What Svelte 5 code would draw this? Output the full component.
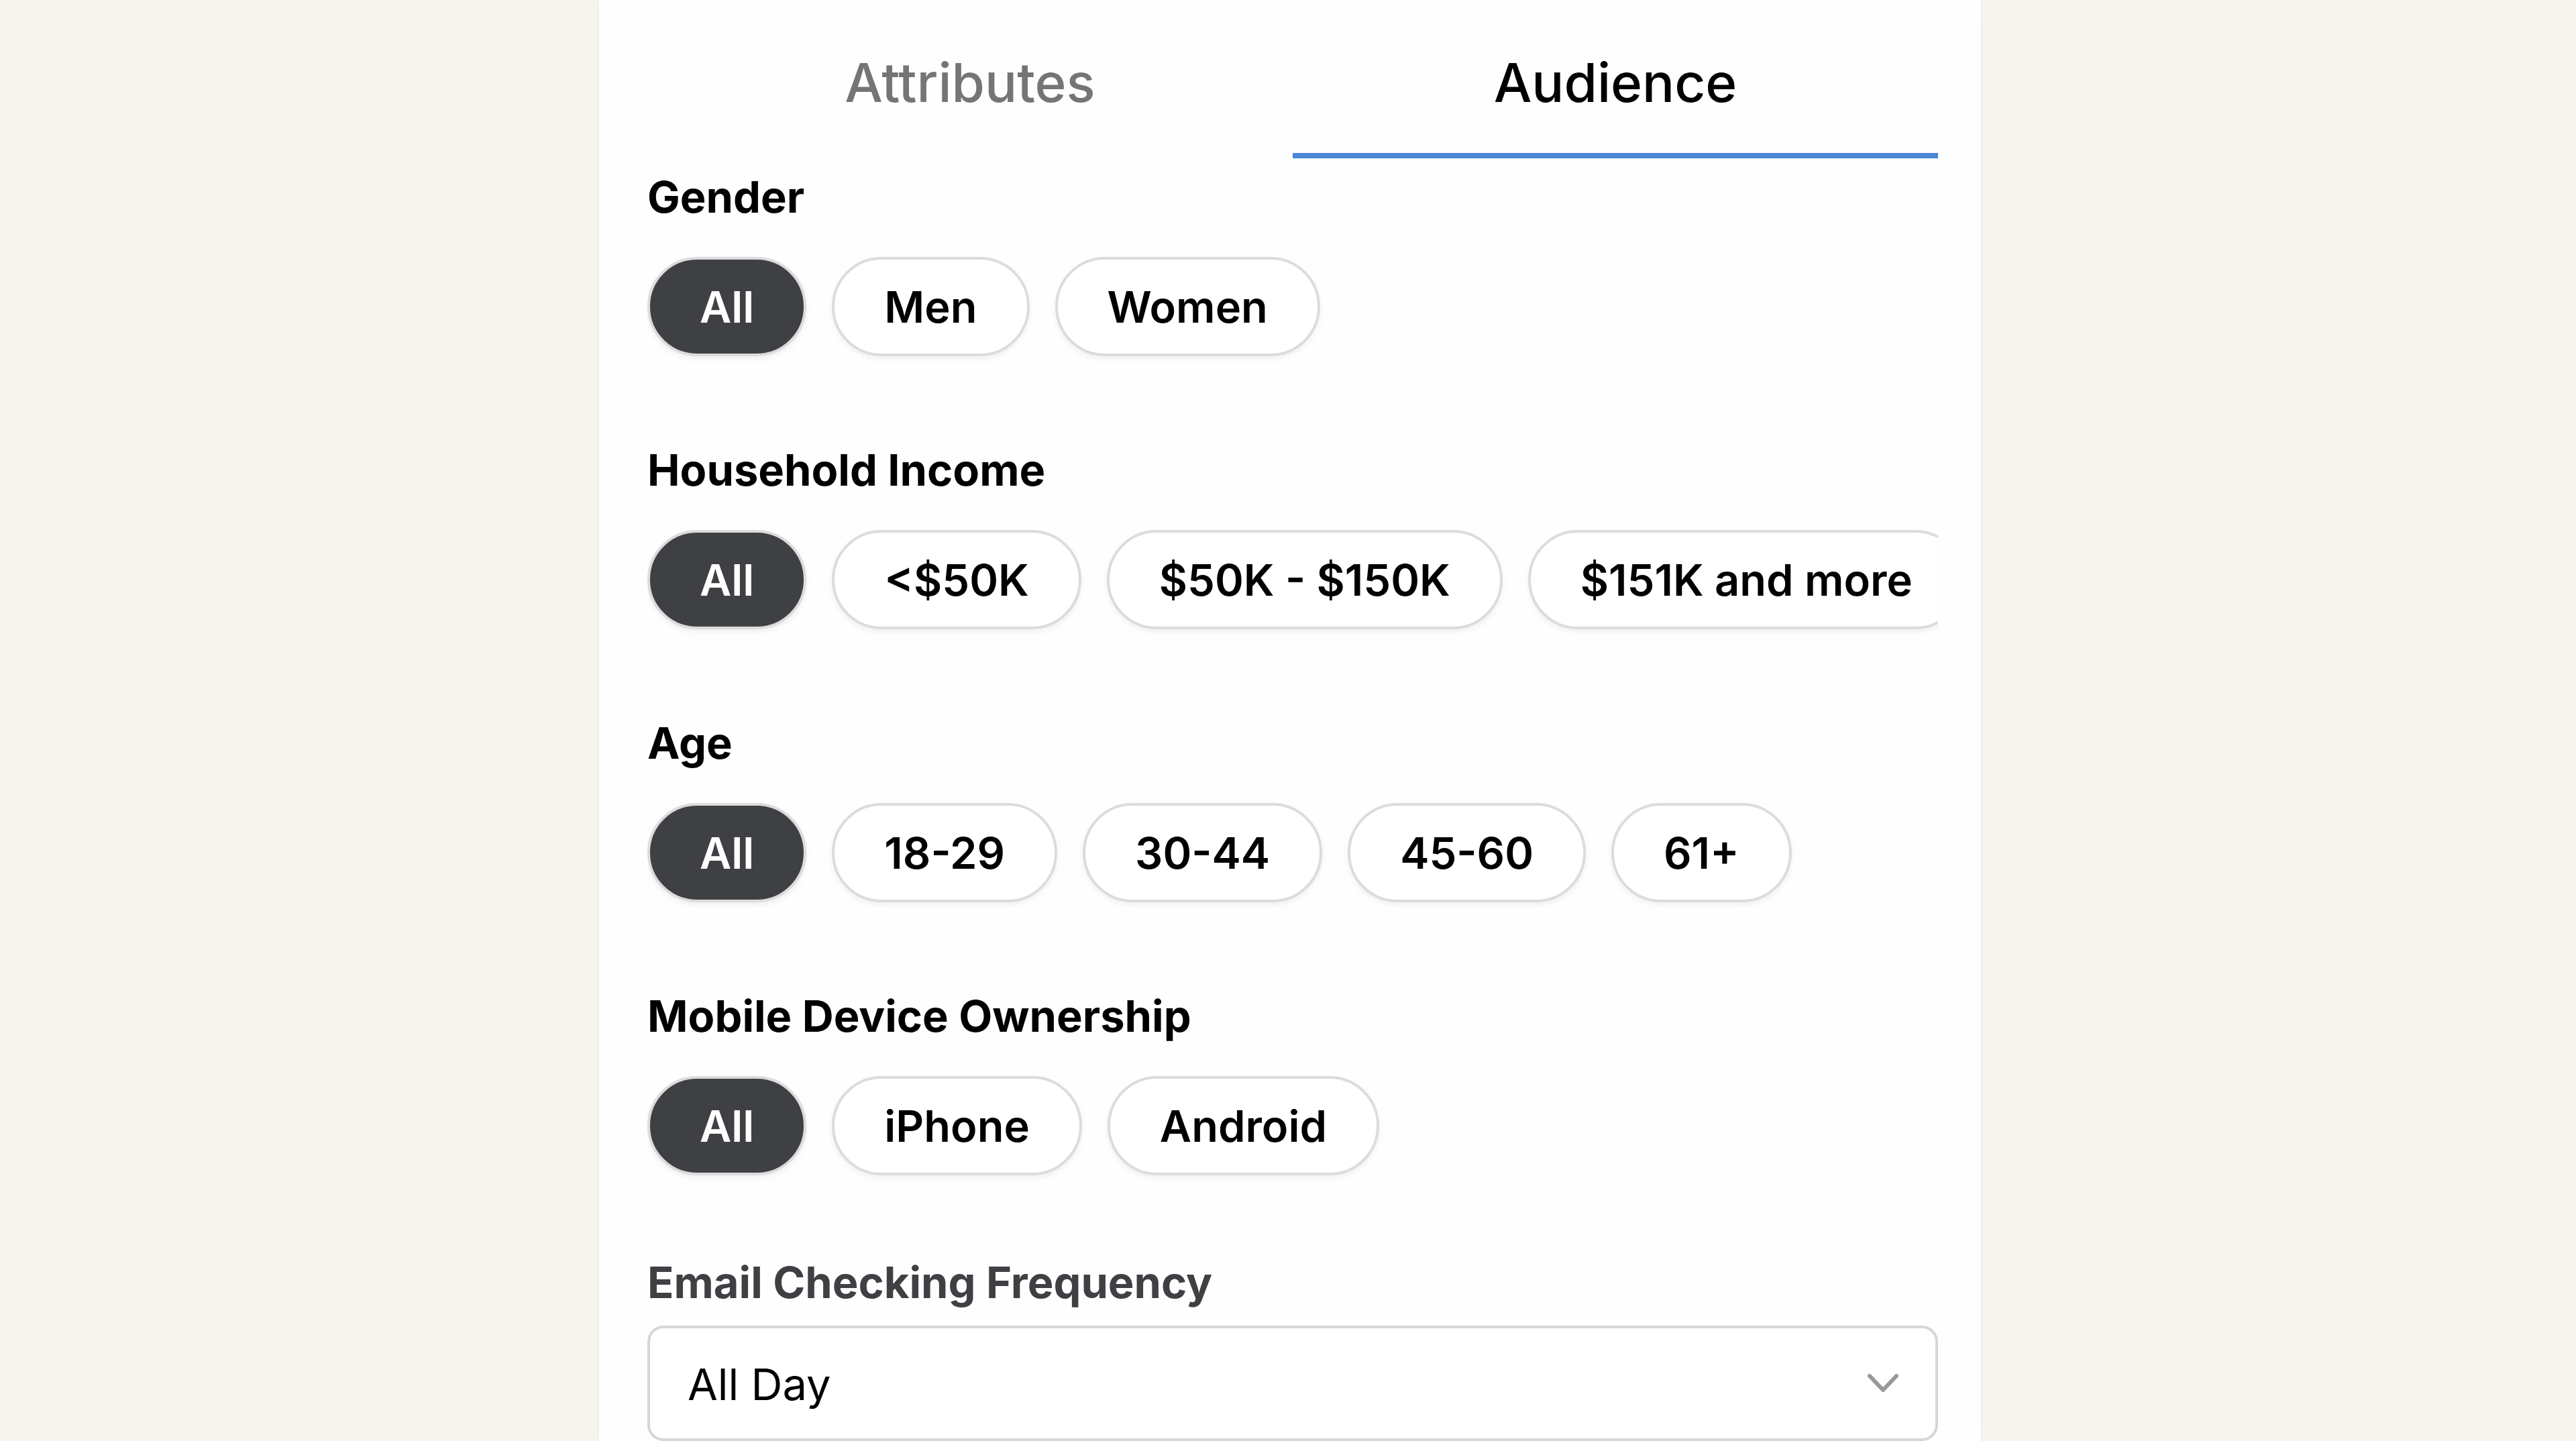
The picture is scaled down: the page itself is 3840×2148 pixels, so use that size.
<script lang="ts">
	interface Group {
		id: string;
		label: string;
		options: string[];
	}

	const TABS = ['Attributes', 'Audience'];

	const GROUPS: Group[] = [
		{ id: 'gender', label: 'Gender', options: ['All', 'Men', 'Women'] },
		{ id: 'income', label: 'Household Income', options: ['All', '<$50K', '$50K - $150K', '$151K and more'] },
		{ id: 'age', label: 'Age', options: ['All', '18-29', '30-44', '45-60', '61+'] },
		{ id: 'device', label: 'Mobile Device Ownership', options: ['All', 'iPhone', 'Android'] }
	];

	const FREQUENCIES = ['All Day', 'Once a Day', 'Weekly'];

	let activeTab = $state('Audience');
	let selected: Record<string, string> = $state({ gender: 'All', income: 'All', age: 'All', device: 'All' });
	let frequency = $state('All Day');
</script>

<div class="page">
	<main class="panel">
		<div class="tabs" role="tablist">
			{#each TABS as tab (tab)}
				<button
					type="button"
					role="tab"
					class="tab"
					class:active={activeTab === tab}
					aria-selected={activeTab === tab}
					onclick={() => (activeTab = tab)}
				>
					{tab}
				</button>
			{/each}
		</div>

		{#each GROUPS as group (group.id)}
			<section class="group" aria-labelledby={group.id}>
				<h2 id={group.id}>{group.label}</h2>
				<div class="pills">
					{#each group.options as option (option)}
						<button
							type="button"
							class="pill"
							class:on={selected[group.id] === option}
							aria-pressed={selected[group.id] === option}
							onclick={() => (selected[group.id] = option)}
						>
							{option}
						</button>
					{/each}
				</div>
			</section>
		{/each}

		<div class="field">
			<label for="frequency">Email Checking Frequency</label>
			<div class="select">
				<select id="frequency" bind:value={frequency}>
					{#each FREQUENCIES as item (item)}
						<option value={item}>{item}</option>
					{/each}
				</select>
				<svg class="chevron" viewBox="0 0 48 30" aria-hidden="true">
					<path d="M4 4 L24 25 L44 4" />
				</svg>
			</div>
		</div>
	</main>
</div>

<style>
	:global(body) {
		background: #f6f5ee;
	}
	.page {
		display: flex;
		justify-content: center;
		padding-left: 6px;
		font-family: Inter, 'Liberation Sans', sans-serif;
		color: #000;
	}
	.panel {
		box-sizing: border-box;
		width: 100%;
		max-width: 2060px;
		padding: 0 64px 0 72px;
		background: #fefefe;
		box-shadow:
			0 0 4px rgba(0, 0, 0, 0.06),
			0 0 40px rgba(0, 0, 0, 0.02);
	}
	button,
	select {
		font-family: inherit;
		cursor: pointer;
	}
	.tabs {
		display: grid;
		grid-template-columns: 1fr 1fr;
	}
	.tab {
		padding: 63px 0 45px;
		border: 0;
		border-bottom: 8px solid transparent;
		background: none;
		color: #757578;
		font-size: 80px;
		font-weight: 500;
		line-height: 120px;
	}
	.tab.active {
		color: #000;
		border-color: #4a85d8;
	}
	.group {
		padding: 18px 0 40px;
	}
	h2,
	label {
		margin: 0;
		font-size: 65px;
		font-weight: 700;
		line-height: 80px;
	}
	.pills {
		display: flex;
		gap: 38px;
		padding: 49px 0 72px;
		overflow: hidden;
	}
	.pill {
		flex: none;
		padding: 2px 74px 0;
		border: 4px solid #dcdcdc;
		border-radius: 74px;
		background: #fff;
		box-shadow: 0 4px 8px rgba(0, 0, 0, 0.06);
		color: #000;
		font-size: 65px;
		font-weight: 600;
		line-height: 138px;
	}
	.pill.on {
		background: #3f4044;
		color: #fff;
	}
	.field {
		padding-top: 8px;
	}
	label {
		display: block;
		color: #3f4044;
	}
	.select {
		display: grid;
		align-items: center;
		margin-top: 24px;
	}
	.select > * {
		grid-area: 1 / 1;
	}
	select {
		appearance: none;
		width: 100%;
		height: 172px;
		padding: 2px 56px 0;
		border: 4px solid #d6d6d6;
		border-radius: 24px;
		background: #fff;
		color: #000;
		font-size: 65px;
	}
	.chevron {
		justify-self: end;
		width: 48px;
		height: 30px;
		margin-right: 58px;
		fill: none;
		stroke: #999;
		stroke-width: 6;
		stroke-linecap: round;
		stroke-linejoin: round;
		pointer-events: none;
	}
</style>
